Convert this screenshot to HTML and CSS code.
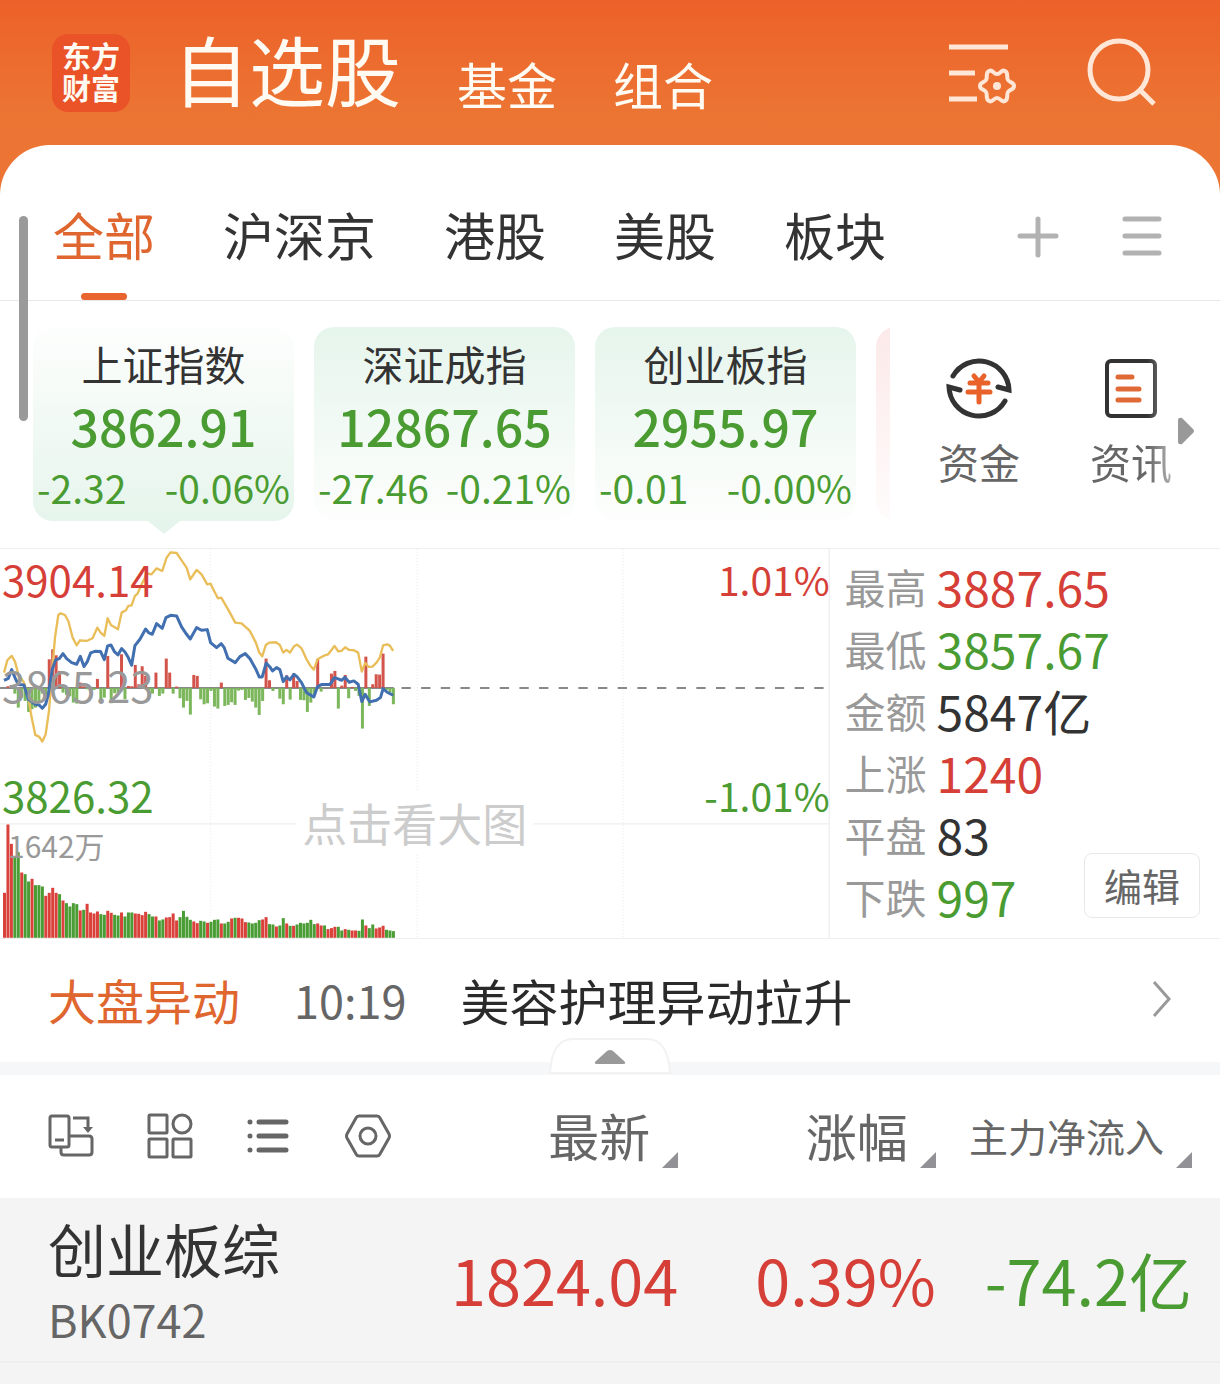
FILE: index.html
```html
<!DOCTYPE html>
<html lang="zh-CN">
<head>
    <meta charset="UTF-8">
    <meta name="viewport" content="width=device-width, initial-scale=1">
    <title>自选股</title>
    <link rel="stylesheet" href="styles.css">
</head>
<body>
    <header class="topbar">
        <div class="logo">东方<br>财富</div>
        <nav class="sections">
            <a href="#" class="current">自选股</a>
            <a href="#">基金</a>
            <a href="#">组合</a>
        </nav>
        <button class="icon-btn" aria-label="设置">
            <svg width="70" height="64" viewBox="0 0 70 64" fill="none" stroke="#ffe6d6" stroke-width="5">
                <path d="M1 6h59M1 32h26M1 58h28"/>
                <path stroke-width="4" stroke-linejoin="round" d="M49 33C53 33 53 28 57 30C61 32 58 36 60 39C62 42 66 41 66 45C66 49 62 48 60 51C58 54 61 58 57 60C53 62 53 57 49 57C45 57 45 62 41 60C37 58 40 54 38 51C36 48 32 49 32 45C32 41 36 42 38 39C40 36 37 32 41 30C45 28 45 33 49 33Z"/>
                <circle cx="49" cy="45" r="4" fill="#ffe6d6" stroke="none"/>
            </svg>
        </button>
        <button class="icon-btn" aria-label="搜索">
            <svg width="70" height="70" viewBox="0 0 70 70" fill="none" stroke="#ffe6d6" stroke-width="5">
                <circle cx="33" cy="32" r="29"/>
                <path d="M53 51l15 15"/>
            </svg>
        </button>
    </header>

    <main class="sheet">
        <div class="scroll-mark"></div>

        <div class="tabs">
            <nav>
                <a href="#" class="active">全部</a>
                <a href="#">沪深京</a>
                <a href="#">港股</a>
                <a href="#">美股</a>
                <a href="#">板块</a>
            </nav>
            <button class="icon-btn" aria-label="添加">
                <svg width="42" height="42" viewBox="0 0 42 42" stroke="#b2b2b2" stroke-width="5" stroke-linecap="round">
                    <path d="M21 3v36M3 20h36"/>
                </svg>
            </button>
            <button class="icon-btn" aria-label="菜单">
                <svg width="42" height="42" viewBox="0 0 42 42" stroke="#b2b2b2" stroke-width="5" stroke-linecap="round">
                    <path d="M4 3h34M4 20h34M4 37h34"/>
                </svg>
            </button>
        </div>

        <section class="overview">
            <div class="indices">
                <div class="index-card selected">
                    <h2>上证指数</h2>
                    <strong>3862.91</strong>
                    <p><span>-2.32</span><span>-0.06%</span></p>
                </div>
                <div class="index-card">
                    <h2>深证成指</h2>
                    <strong>12867.65</strong>
                    <p><span>-27.46</span><span>-0.21%</span></p>
                </div>
                <div class="index-card">
                    <h2>创业板指</h2>
                    <strong>2955.97</strong>
                    <p><span>-0.01</span><span>-0.00%</span></p>
                </div>
                <div class="index-card rising"></div>
            </div>
            <div class="links">
                <a href="#">
                    <svg width="66" height="66" viewBox="0 0 66 66" fill="none" stroke="#333" stroke-width="5" stroke-linecap="round">
                        <path d="M7 21A30 30 0 0 1 63 35L52 32"/>
                        <path d="M59 46A30 30 0 0 1 3 32L14 35"/>
                        <path stroke="#e9622b" d="M28 21l5 6 5-6M24 28h18M22 37h22M33 28v19"/>
                    </svg>
                    资金
                </a>
                <a href="#">
                    <svg width="66" height="66" viewBox="0 0 66 66" fill="none" stroke="#333" stroke-width="4" stroke-linecap="round">
                        <rect x="9" y="6" width="48" height="55" rx="4"/>
                        <path stroke="#e06a35" stroke-width="5" d="M20 22h14M20 34h21M20 45h21"/>
                    </svg>
                    资讯
                </a>
                <svg class="more" width="16" height="28" viewBox="0 0 16 28"><path fill="#999" d="M0 3Q0 0 4 1L15 12Q17 14 15 16L4 27Q0 28 0 25Z"/></svg>
            </div>
        </section>

        <section class="market">
            <div class="chart">
                <svg viewBox="0 0 2490 1167">
                    <g fill="none" stroke="#eee" stroke-width="4">
                        <path d="M0 825H2490M2489 0V1167"/>
                        <path stroke-dasharray="3 6" d="M632 0V1167M1252 0V1167M1870 0V1167"/>
                    </g>
                    <path stroke="#888" stroke-width="6" d="M0 417H1182"/>
                    <path stroke="#888" stroke-width="6" stroke-dasharray="28 31" d="M1205 417H2490"/>
                    <g id="flow"></g>
                    <g id="volume"></g>
                    <g transform="translate(0 -24)" fill="none" stroke-linejoin="round">
                        <polyline stroke="#e9bd58" stroke-width="7" points="12,395 22,358 35,345 45,362 55,400 72,425 85,470 95,530 106,582 118,588 127,602 137,580 147,510 155,410 165,290 175,222 182,217 195,222 205,240 218,290 230,313 240,298 260,300 278,292 292,260 302,275 313,285 323,232 333,252 354,265 365,215 378,208 385,195 395,193 405,165 413,158 425,130 433,115 440,97 455,100 470,82 487,90 500,50 512,34 530,36 545,58 560,80 571,115 590,87 605,100 622,130 632,128 640,145 654,172 664,170 690,215 706,245 725,247 750,270 768,305 778,335 787,346 798,312 808,305 828,304 840,312 850,335 860,327 870,335 882,317 892,311 905,322 920,355 932,375 942,386 953,355 975,343 985,340 1004,315 1015,331 1025,330 1036,319 1048,327 1062,328 1075,335 1086,392 1096,366 1107,378 1118,377 1130,365 1140,350 1150,313 1162,310 1170,314 1180,330"/>
                        <polyline stroke="#416fb0" stroke-width="9" points="12,418 25,412 35,386 47,415 55,431 72,432 85,475 105,490 117,492 127,502 137,490 145,460 157,385 167,357 178,353 189,338 200,353 215,365 230,370 241,346 252,377 262,362 272,336 285,331 302,332 313,356 323,315 333,312 344,333 354,342 365,323 375,333 385,350 395,373 405,314 420,295 437,264 447,276 457,280 470,248 487,262 498,230 512,223 530,225 545,258 560,280 571,294 590,260 605,268 622,266 632,305 650,320 664,308 673,320 684,352 706,365 720,347 736,338 750,353 768,385 778,408 787,408 799,366 810,378 818,390 830,380 840,386 850,422 860,408 870,417 882,400 892,408 905,425 920,455 932,462 942,468 953,437 965,431 990,431 1004,410 1015,414 1025,418 1035,409 1048,424 1062,420 1075,430 1086,482 1096,460 1110,483 1130,478 1142,470 1150,443 1162,454 1180,463"/>
                    </g>
                </svg>
                <span class="mark high up">3904.14</span>
                <span class="mark high right up">1.01%</span>
                <span class="mark middle">3865.23</span>
                <span class="mark low down">3826.32</span>
                <span class="mark low right down">-1.01%</span>
                <span class="mark amount">1642万</span>
                <button class="enlarge">点击看大图</button>
            </div>
            <div class="stats">
                <dl>
                    <dt>最高</dt><dd class="up">3887.65</dd>
                    <dt>最低</dt><dd class="down">3857.67</dd>
                    <dt>金额</dt><dd>5847亿</dd>
                    <dt>上涨</dt><dd class="up">1240</dd>
                    <dt>平盘</dt><dd>83</dd>
                    <dt>下跌</dt><dd class="down">997</dd>
                </dl>
                <button class="edit">编辑</button>
            </div>
        </section>

        <a href="#" class="news">
            <b>大盘异动</b>
            <time>10:19</time>
            <span>美容护理异动拉升</span>
            <svg width="20" height="38" viewBox="0 0 20 38" fill="none" stroke="#999" stroke-width="3"><path d="M2 2l15 17L2 36"/></svg>
        </a>

        <div class="divider">
            <button class="collapse" aria-label="收起">
                <svg width="122" height="36" viewBox="0 0 122 36">
                    <path fill="#fff" stroke="#f2f2f2" stroke-width="2" d="M1 35Q3 1 24 1H98Q119 1 121 35Z"/>
                    <path fill="#999" d="M47 23L58 13Q61 11 64 13L75 23Q78 26 74 26H48Q44 26 47 23Z"/>
                </svg>
            </button>
        </div>

        <table class="stocks">
            <thead>
                <tr>
                    <th>
                        <div class="tools">
                            <button class="icon-btn" aria-label="横屏">
                                <svg width="46" height="46" viewBox="0 0 46 46" fill="none" stroke="#666" stroke-width="3">
                                    <rect x="2" y="3" width="19" height="31" rx="2"/>
                                    <path d="M7 27h9M25 5h15v13"/>
                                    <path d="M21 23h20q3 0 3 3v13q0 3-3 3H16q-3 0-3-3v-5"/>
                                    <path fill="#666" stroke="none" d="M35 14h10l-5 6z"/>
                                </svg>
                            </button>
                            <button class="icon-btn" aria-label="宫格">
                                <svg width="46" height="46" viewBox="0 0 46 46" fill="none" stroke="#666" stroke-width="3">
                                    <rect x="2" y="2" width="18" height="18" rx="1"/>
                                    <circle cx="35" cy="11" r="9"/>
                                    <rect x="2" y="26" width="18" height="18" rx="1"/>
                                    <rect x="26" y="26" width="18" height="18" rx="1"/>
                                </svg>
                            </button>
                            <button class="icon-btn" aria-label="列表">
                                <svg width="46" height="46" viewBox="0 0 46 46" stroke="#666" stroke-width="5" stroke-linecap="round">
                                    <path d="M4 9h0M4 23h0M4 37h0M13 9h27M13 23h27M13 37h27"/>
                                </svg>
                            </button>
                            <button class="icon-btn" aria-label="列设置">
                                <svg width="46" height="46" viewBox="0 0 46 46" fill="none" stroke="#666" stroke-width="3">
                                    <path d="M14 3H32Q34 3 35 5L44 21Q45 23 44 25L35 41Q34 43 32 43H14Q12 43 11 41L2 25Q1 23 2 21L11 5Q12 3 14 3Z"/>
                                    <circle cx="23" cy="23" r="8"/>
                                </svg>
                            </button>
                        </div>
                    </th>
                    <th><button class="sort">最新</button></th>
                    <th><button class="sort">涨幅</button></th>
                    <th><button class="sort small">主力净流入</button></th>
                </tr>
            </thead>
            <tbody>
                <tr>
                    <td><div class="name">创业板综</div><div class="code">BK0742</div></td>
                    <td class="up">1824.04</td>
                    <td class="up">0.39%</td>
                    <td class="down">-74.2亿</td>
                </tr>
            </tbody>
        </table>
    </main>

    <script src="chart.js"></script>
</body>
</html>
```
FILE: styles.css
```css
* {
    box-sizing: border-box;
}
body {
    margin: 0;
    font-family: "Noto Sans CJK SC", "Noto Sans", sans-serif;
    color: #333;
    background: #f4f4f4 linear-gradient(#ec6129, #ec7433 110px, #ec7535 200px) no-repeat;
    background-size: 100% 200px;
}
a {
    color: inherit;
    text-decoration: none;
}
button {
    padding: 0;
    border: none;
    background: none;
    font: inherit;
    color: inherit;
    cursor: pointer;
}
h2, p, dl, dd {
    margin: 0;
    font-weight: normal;
}
svg {
    display: block;
}
.up {
    color: #d53f37;
}
.down {
    color: #4a9c32;
}

/* header */
.topbar {
    display: flex;
    align-items: center;
    height: 145px;
    padding: 0 64px 0 52px;
    color: #fffaf2;
}
.logo {
    width: 78px;
    height: 78px;
    padding-top: 5px;
    border-radius: 16px;
    background: #ea5227;
    font-size: 29px;
    font-weight: bold;
    line-height: 32px;
    text-align: center;
}
.sections {
    display: flex;
    flex: 1;
    align-items: center;
    gap: 56px;
    margin-left: 43px;
    padding-bottom: 10px;
    font-size: 50px;
    line-height: 60px;
}
.sections a {
    padding-top: 30px;
}
.sections .current {
    padding-top: 0;
    font-size: 76px;
    line-height: 100px;
}
.topbar .icon-btn + .icon-btn {
    margin-left: 68px;
}

/* white sheet */
.sheet {
    position: relative;
    overflow: hidden;
    border-radius: 50px 50px 0 0;
    background: #fff;
}
.scroll-mark {
    position: absolute;
    top: 71px;
    left: 19px;
    width: 9px;
    height: 205px;
    border-radius: 5px;
    background: #9a9a9a;
}
.tabs {
    display: flex;
    align-items: center;
    height: 156px;
    padding: 28px 57px 0 53px;
    border-bottom: 1px solid #e8e8e8;
}
.tabs nav {
    display: flex;
    flex: 1;
    gap: 68px;
    font-size: 51px;
    line-height: 123px;
}
.tabs nav a {
    padding-bottom: 4px;
}
.tabs .active {
    position: relative;
    color: #e0662f;
}
.tabs .active::after {
    content: "";
    position: absolute;
    left: 28px;
    bottom: 0;
    width: 46px;
    height: 7px;
    border-radius: 4px;
    background: #e9642f;
}
.tabs .icon-btn + .icon-btn {
    margin-left: 62px;
}

/* indices and shortcuts */
.overview {
    display: flex;
    height: 247px;
    padding: 26px 0 0 33px;
}
.indices {
    display: flex;
    flex: 1;
    gap: 20px;
    min-width: 0;
    overflow: hidden;
}
.index-card {
    position: relative;
    flex: 0 0 261px;
    height: 194px;
    padding-top: 6px;
    border-radius: 20px;
    background: linear-gradient(#e6f5ec, #fdfefd);
    color: #4a9c32;
    text-align: center;
}
.index-card.selected {
    background: linear-gradient(#fdfefd, #e6f5ec);
}
.index-card.selected::after {
    content: "";
    position: absolute;
    top: 100%;
    left: 50%;
    margin-left: -16px;
    border: 16px solid transparent;
    border-top: 13px solid #e6f5ec;
    border-bottom: none;
}
.index-card.rising {
    background: linear-gradient(#fce9e9, #fffcfc);
}
.index-card h2 {
    color: #333;
    font-size: 41px;
    line-height: 60px;
}
.index-card strong {
    display: block;
    font-size: 50px;
    font-weight: 500;
    line-height: 64px;
}
.index-card p {
    display: flex;
    justify-content: space-between;
    padding: 0 4px;
    font-size: 39px;
    line-height: 60px;
}
.links {
    display: flex;
    flex: 0 0 330px;
    align-items: flex-start;
    padding: 28px 26px 0 48px;
}
.links a {
    width: 82px;
    color: #666;
    font-size: 41px;
    line-height: 80px;
}
.links a + a {
    margin-left: 70px;
    -webkit-mask-image: linear-gradient(to right, #000 70%, rgba(0, 0, 0, 0.5));
    mask-image: linear-gradient(to right, #000 70%, rgba(0, 0, 0, 0.5));
}
.links a svg {
    margin: 0 auto;
}
.links .more {
    flex: none;
    margin: 62px 0 0 6px;
}

/* chart and figures */
.market {
    display: grid;
    grid-template-columns: 17fr 8fr;
    border-top: 1px solid #eee;
    border-bottom: 1px solid #eee;
}
.chart {
    position: relative;
}
.chart > svg {
    width: 100%;
}
.mark {
    position: absolute;
    left: 2px;
    font-size: 42px;
    line-height: 60px;
}
.mark.right {
    left: auto;
    right: 0;
    font-size: 39px;
}
.mark.high {
    top: 0;
}
.mark.middle {
    top: 106px;
    color: #999;
}
.mark.low {
    top: 216px;
}
.mark.amount {
    top: 266px;
    left: 8px;
    color: #999;
    font-size: 30px;
}
.enlarge {
    position: absolute;
    top: 243px;
    left: 50%;
    transform: translateX(-50%);
    padding: 0 6px;
    background: #fff;
    color: #ccc;
    font-size: 45px;
    line-height: 62px;
    white-space: nowrap;
}
.stats {
    display: flex;
    align-items: flex-end;
    justify-content: space-between;
    padding: 0 20px 11px 15px;
}
.stats dl {
    display: grid;
    grid-template-columns: auto auto;
    column-gap: 10px;
    margin-right: -100px;
    line-height: 62px;
}
.stats dt {
    color: #999;
    font-size: 41px;
}
.stats dd {
    font-size: 48px;
}
.edit {
    width: 116px;
    height: 65px;
    margin-bottom: 9px;
    border: 1px solid #e8e8e8;
    border-radius: 8px;
    color: #666;
    font-size: 38px;
    line-height: 60px;
}

/* news line */
.news {
    display: flex;
    align-items: center;
    height: 123px;
    padding: 0 48px 2px;
    color: #2a2a2a;
    font-size: 49px;
}
.news b {
    color: #e0662f;
    font-size: 48px;
    font-weight: normal;
}
.news time {
    margin: 0 54px;
    color: #666;
    font-size: 45px;
}
.news span {
    flex: 1;
}
.divider {
    position: relative;
    height: 13px;
    background: #f5f7f9;
}
.collapse {
    position: absolute;
    left: 50%;
    bottom: 1px;
    margin-left: -61px;
}

/* stock list */
.stocks {
    width: 100%;
    table-layout: fixed;
    border-collapse: collapse;
}
.stocks th, .stocks td {
    padding: 0;
    text-align: right;
    font-weight: normal;
    white-space: nowrap;
}
.stocks th {
    height: 123px;
    color: #666;
    font-size: 51px;
    line-height: 64px;
}
.stocks td {
    height: 164px;
    padding-bottom: 2px;
    font-size: 63px;
}
.stocks th:first-child, .stocks td:first-child {
    width: 34.5%;
    padding-left: 48px;
    text-align: left;
}
.stocks td:first-child {
    padding-top: 4px;
    padding-bottom: 0;
}
.stocks th:last-child, .stocks td:last-child {
    width: 23.3%;
    padding-right: 28px;
}
.tools {
    display: flex;
    gap: 53px;
}
.sort {
    display: block;
    position: relative;
    margin-left: auto;
    padding: 0 28px 2px 0;
    line-height: 62px;
}
.sort.small {
    font-size: 39px;
}
.sort::after {
    content: "";
    position: absolute;
    right: 0;
    bottom: 0;
    border-left: 16px solid transparent;
    border-bottom: 16px solid #919196;
}
.stocks tbody tr {
    background: #f4f4f4;
    border-bottom: 2px solid #eee;
}
.name {
    font-size: 58px;
    line-height: 76px;
}
.code {
    color: #666;
    font-size: 45px;
    line-height: 66px;
}
```
FILE: chart.js
```js
const NS = "http://www.w3.org/2000/svg";
const STEP = 10.33;

// per-minute volume: height and direction (r = up, g = down)
const volume = [135,340,282,244,257,196,191,169,177,158,158,154,126,135,150,135,131,112,104,94,104,101,82,84,102,76,73,79,71,69,81,75,69,67,76,64,76,76,73,72,68,78,71,64,64,52,55,61,62,73,52,62,81,63,54,49,44,51,49,45,48,54,55,43,43,48,58,60,60,58,47,46,43,45,53,55,62,41,40,34,37,59,43,36,36,40,45,43,45,54,41,43,37,37,26,29,33,33,22,26,24,22,22,21,55,37,29,40,28,31,36,24,22,20];
const volumeDir = "rrrggrggrgggrrrrgrggggrgrrrrggrrggrgggrrrrggrggrrrrggggrrggrgggrggrgrrrggggrrggrggrgrggggggrrgrrrggrgrrggrggrrrggg";

// positive bars rise from the zero line, negative ones hang below it
const flow = [0,5,2,-17,-59,-29,-39,-72,-64,-59,-44,-17,-34,86,116,98,51,-14,-21,-25,-44,-47,16,5,-4,-8,-6,27,-37,-29,96,-46,-16,-14,101,-34,6,5,69,11,65,36,-27,-17,46,-24,-17,88,46,-17,4,-31,-59,-39,-80,39,36,-34,-49,-46,-9,-56,-62,16,-54,-51,-43,-51,-8,-6,-36,-30,-41,-59,-81,-39,88,23,-9,-1,-32,-49,38,-35,43,21,-36,-37,-72,-44,-19,86,-11,0,0,43,51,-62,7,39,-31,3,-9,-24,-122,94,-54,11,41,40,103,-6,-14,-49];

function addBar(group, i, y, height, color) {
    const rect = document.createElementNS(NS, "rect");
    rect.setAttribute("x", 9 + i * STEP);
    rect.setAttribute("y", y);
    rect.setAttribute("width", 9);
    rect.setAttribute("height", height);
    rect.setAttribute("fill", color);
    group.appendChild(rect);
}

const flowGroup = document.getElementById("flow");
flow.forEach((v, i) => {
    if (v >= 0) {
        addBar(flowGroup, i, 417 - v, v, "#d2544b");
    } else {
        addBar(flowGroup, i, 417, -v, "#7cb75c");
    }
});

const volumeGroup = document.getElementById("volume");
volume.forEach((v, i) => {
    addBar(volumeGroup, i, 1167 - v, v, volumeDir[i] === "r" ? "#d9413a" : "#4a9c35");
});
```
